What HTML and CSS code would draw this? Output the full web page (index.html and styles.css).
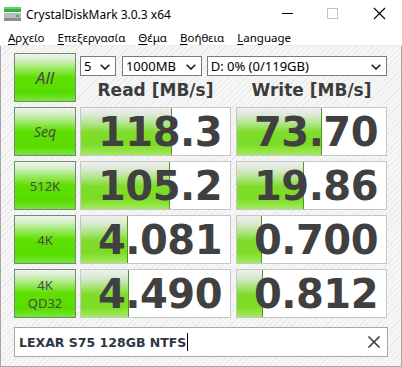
FILE: index.html
```html
<!DOCTYPE html>
<html>
<head>
<meta charset="utf-8">
<link rel="stylesheet" href="styles.css">
</head>
<body>
<div class="window">
  <div class="titlebar">
    <svg class="appicon" width="18" height="14" viewBox="0 0 18 14">
      <rect x="0" y="0" width="17" height="5" fill="#2fb344"/>
      <rect x="0" y="0" width="17" height="2" fill="#5fd06a"/>
      <rect x="0" y="6" width="17" height="8" fill="#b9bcbf"/>
      <rect x="0" y="11" width="17" height="3" fill="#8b8f93"/>
      <rect x="12" y="8" width="3" height="2" fill="#32c04a"/>
    </svg>
    <span class="title">CrystalDiskMark 3.0.3 x64</span>
    <div class="controls">
      <svg class="ctl" width="46" height="30" viewBox="0 0 46 30"><line x1="18" y1="13.5" x2="29" y2="13.5" stroke="#000" stroke-width="1"/></svg>
      <svg class="ctl" width="46" height="30" viewBox="0 0 46 30"><rect x="17.5" y="8.5" width="10" height="10" fill="none" stroke="#c4c4c4" stroke-width="1"/></svg>
      <svg class="ctl" width="46" height="30" viewBox="0 0 46 30"><path d="M18 8 L29 19 M29 8 L18 19" stroke="#000" stroke-width="1.1"/></svg>
    </div>
  </div>
  <div class="menubar">
    <span class="mi"><u>Α</u>ρχείο</span>
    <span class="mi"><u>Ε</u>πεξεργασία</span>
    <span class="mi"><u>Θ</u>έμα</span>
    <span class="mi"><u>Β</u>οήθεια</span>
    <span class="mi"><u>L</u>anguage</span>
  </div>
  <div class="client">
    <div class="grid">
      <div class="btn btn-all">All</div>
      <div class="topright">
        <div class="selects">
          <div class="sel s1"><span>5</span><svg width="10" height="6" viewBox="0 0 10 6"><path d="M0.7 0.7 L5 5 L9.3 0.7" fill="none" stroke="#1a1a1a" stroke-width="1.6"/></svg></div>
          <div class="sel s2"><span>1000MB</span><svg width="10" height="6" viewBox="0 0 10 6"><path d="M0.7 0.7 L5 5 L9.3 0.7" fill="none" stroke="#1a1a1a" stroke-width="1.6"/></svg></div>
          <div class="sel s3"><span>D: 0% (0/119GB)</span><svg width="10" height="6" viewBox="0 0 10 6"><path d="M0.7 0.7 L5 5 L9.3 0.7" fill="none" stroke="#1a1a1a" stroke-width="1.6"/></svg></div>
        </div>
        <div class="heads">
          <div class="head">Read [MB/s]</div>
          <div class="head">Write [MB/s]</div>
        </div>
      </div>

      <div class="btn btn-it">Seq</div>
      <div class="cell"><div class="bar" style="width:61%"></div><span class="val">118.3</span></div>
      <div class="cell wcell"><div class="bar" style="width:57%"></div><span class="val">73.70</span></div>

      <div class="btn">512K</div>
      <div class="cell"><div class="bar" style="width:60%"></div><span class="val">105.2</span></div>
      <div class="cell wcell"><div class="bar" style="width:45%"></div><span class="val">19.86</span></div>

      <div class="btn">4K</div>
      <div class="cell"><div class="bar" style="width:31.5%"></div><span class="val">4.081</span></div>
      <div class="cell wcell"><div class="bar" style="width:16.5%"></div><span class="val">0.700</span></div>

      <div class="btn btn-two"><span>4K</span><span>QD32</span></div>
      <div class="cell"><div class="bar" style="width:32%"></div><span class="val">4.490</span></div>
      <div class="cell wcell"><div class="bar" style="width:17.5%"></div><span class="val">0.812</span></div>
    </div>
    <div class="comment">
      <span class="ctext">LEXAR S75 128GB NTFS</span><span class="caret"></span>
      <svg class="clear" width="14" height="14" viewBox="0 0 14 14"><path d="M1.5 1.5 L12.5 12.5 M12.5 1.5 L1.5 12.5" stroke="#3a3a3a" stroke-width="1.6"/></svg>
    </div>
  </div>
</div>
</body>
</html>
```
FILE: styles.css
```css
* { box-sizing: border-box; }
html, body { margin: 0; padding: 0; background: #fff; }
body { width: 402px; height: 367px; overflow: hidden; font-family: "Noto Sans", "Open Sans", sans-serif; }

.window { width: 402px; height: 367px; display: flex; flex-direction: column; }

.titlebar { height: 30px; display: flex; align-items: center; background: #fff; }
.appicon { margin-left: 4px; margin-top: -2px; }
.title { margin-left: 4px; font-size: 12px; color: #000; margin-top: -2px; }
.controls { margin-left: auto; display: flex; }
.ctl { display: block; }

.menubar { height: 16px; display: flex; align-items: center; font-size: 11.5px; color: #000; border-bottom: 1px solid #ececec; padding-left: 8px; padding-bottom: 1px; }
.mi { margin-right: 13px; }
.mi u { text-decoration-thickness: 1px; text-underline-offset: 2px; }

.client {
  flex: 1;
  border: 1px solid #a6a6a6;
  border-top: none;
  background: repeating-linear-gradient(135deg, #f6f6f6 0 3px, #eaeaea 3px 4px);
  padding: 7px 0 0 13px;
}

.grid {
  display: grid;
  grid-template-columns: 62px 151px 152px;
  grid-auto-rows: 49px;
  column-gap: 4px;
  row-gap: 5px;
}

.btn {
  border: 1px solid #6e8c6e;
  background: linear-gradient(to bottom, #f2f2f2 0%, #d8efcc 12%, #96e85c 32%, #5ee000 50%, #58dc00 82%, #7ae63a 100%);
  display: flex;
  align-items: center;
  justify-content: center;
  color: #4a4a4a;
  font-size: 13px;
}
.btn-all { font-size: 17px; font-style: italic; }
.btn-it { font-size: 14px; font-style: italic; }
.btn-two { flex-direction: column; line-height: 18px; }

.topright { grid-column: 2 / 4; display: flex; flex-direction: column; }
.selects { display: flex; margin-top: 3px; height: 20px; }
.sel {
  height: 20px;
  border: 1px solid #7a7a7a;
  background: #fff;
  display: flex;
  align-items: center;
  justify-content: space-between;
  padding: 0 5px 0 3px;
  font-size: 13px;
  color: #000;
}
.sel svg { margin-top: 1px; }
.s1 { width: 36px; }
.s2 { width: 80px; margin-left: 6px; }
.s3 { width: 181px; margin-left: 5px; }

.heads { display: flex; height: 26px; align-items: center; }
.head {
  width: 151px;
  text-align: center;
  font-family: "DejaVu Sans", sans-serif;
  font-weight: bold;
  font-size: 17px;
  color: #3c3c3c;
  margin-top: 1px;
}
.head + .head { margin-left: 5px; }

.cell {
  position: relative;
  background: #fff;
  border: 1px solid #c6c6c6;
  display: flex;
  align-items: center;
  justify-content: flex-end;
  padding-right: 8px;
  overflow: hidden;
}
.wcell { width: 151px; justify-self: end; }
.bar {
  position: absolute;
  left: 0; top: 0; bottom: 0;
  background: linear-gradient(to bottom, #eef0ee 0%, #dbe8d4 16%, #a8e47a 36%, #80dc2a 52%, #7cdc24 78%, #a4ea60 100%);
  border-right: 1px solid #4c9a24;
}
.val {
  position: relative;
  font-family: "DejaVu Sans", sans-serif;
  font-weight: bold;
  font-size: 40px;
  line-height: 1;
  color: #404040;
  letter-spacing: -0.5px;
}

.comment {
  margin-top: 9px;
  width: 374px;
  height: 30px;
  border: 1px solid #a8a8a8;
  background: #fff;
  display: flex;
  align-items: center;
  padding-left: 4px;
}
.ctext { font-family: "DejaVu Sans", sans-serif; font-size: 12.5px; font-weight: bold; color: #2e3644; }
.caret { width: 1px; height: 18px; background: #000; margin-left: 1px; }
.clear { margin-left: auto; margin-right: 6px; }
```
